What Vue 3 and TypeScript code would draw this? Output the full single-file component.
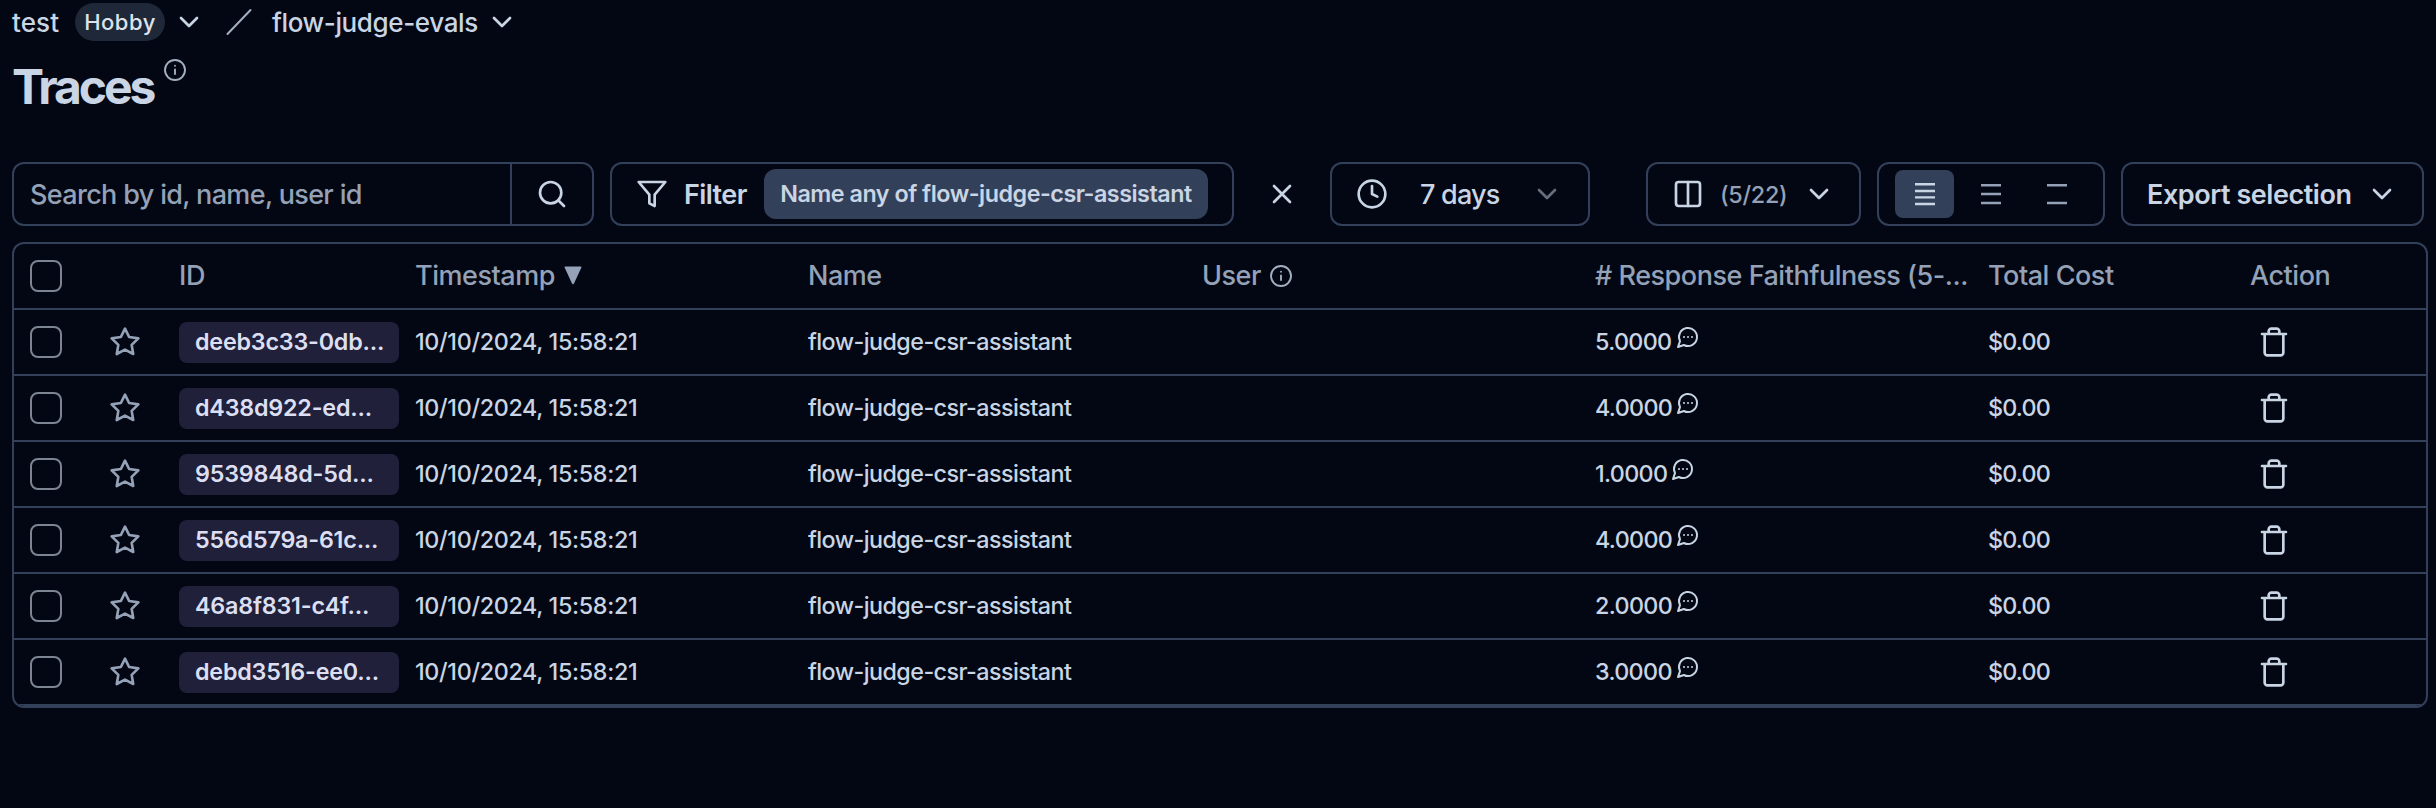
<script setup lang="ts">
interface Trace {
  id: string
  timestamp: string
  name: string
  score: string
  cost: string
}

const timestamp = '10/10/2024, 15:58:21'
const name = 'flow-judge-csr-assistant'

const traces: Trace[] = [
  { id: 'deeb3c33-0db...', timestamp, name, score: '5.0000', cost: '$0.00' },
  { id: 'd438d922-ed...', timestamp, name, score: '4.0000', cost: '$0.00' },
  { id: '9539848d-5d...', timestamp, name, score: '1.0000', cost: '$0.00' },
  { id: '556d579a-61c...', timestamp, name, score: '4.0000', cost: '$0.00' },
  { id: '46a8f831-c4f...', timestamp, name, score: '2.0000', cost: '$0.00' },
  { id: 'debd3516-ee0...', timestamp, name, score: '3.0000', cost: '$0.00' },
]
</script>

<template>
  <main class="page">
    <nav class="crumbs">
      <span class="crumb test">test</span>
      <span class="plan">Hobby</span>
      <svg class="icon org-chevron" viewBox="0 0 24 24"><path d="m6 9 6 6 6-6" /></svg>
      <svg class="slash" viewBox="0 0 26 28"><path d="M24.5 2 1.5 26" /></svg>
      <span class="crumb">flow-judge-evals</span>
      <svg class="icon project-chevron" viewBox="0 0 24 24"><path d="m6 9 6 6 6-6" /></svg>
    </nav>

    <header class="title">
      <h1>Traces</h1>
      <svg class="icon info" viewBox="0 0 24 24"><circle cx="12" cy="12" r="10" /><path d="M12 16v-4.5M12 7.7v.1" /></svg>
    </header>

    <section class="toolbar">
      <div class="box search">
        <span class="placeholder">Search by id, name, user id</span>
        <button class="search-btn">
          <svg class="icon" viewBox="0 0 24 24"><circle cx="11" cy="11" r="8" /><path d="m21 21-4.3-4.3" /></svg>
        </button>
      </div>

      <button class="box filter">
        <svg class="icon" viewBox="0 0 24 24"><path d="M22 3H2l8 9.46V19l4 2v-8.54L22 3z" /></svg>
        <span class="filter-label">Filter</span>
        <span class="badge">Name any of flow-judge-csr-assistant</span>
      </button>

      <button class="clear">
        <svg class="icon" viewBox="0 0 24 24"><path d="M18 6 6 18M6 6l12 12" /></svg>
      </button>

      <button class="box range">
        <svg class="icon" viewBox="0 0 24 24"><circle cx="12" cy="12" r="10" /><path d="M12 6v6l4 2" /></svg>
        <span class="range-label">7 days</span>
        <svg class="icon faded" viewBox="0 0 24 24"><path d="m6 9 6 6 6-6" /></svg>
      </button>

      <div class="right">
        <button class="box columns">
          <svg class="icon" viewBox="0 0 24 24"><rect x="3" y="3" width="18" height="18" rx="2" /><path d="M12 3v18" /></svg>
          <span class="count">(5/22)</span>
          <svg class="icon" viewBox="0 0 24 24"><path d="m6 9 6 6 6-6" /></svg>
        </button>

        <div class="box density">
          <button class="density-btn active">
            <svg viewBox="0 0 20 24"><path d="M0 2.3h20M0 9h20M0 15.4h20M0 22h20" /></svg>
          </button>
          <button class="density-btn">
            <svg viewBox="0 0 20 24"><path d="M0 3.3h20M0 12h20M0 21h20" /></svg>
          </button>
          <button class="density-btn">
            <svg viewBox="0 0 20 24"><path d="M0 3.3h20M0 21h20" /></svg>
          </button>
        </div>

        <button class="box export">
          <span class="export-label">Export selection</span>
          <svg class="icon" viewBox="0 0 24 24"><path d="m6 9 6 6 6-6" /></svg>
        </button>
      </div>
    </section>

    <section class="table">
      <div class="row head">
        <div><span class="check"></span></div>
        <div></div>
        <div class="text">ID</div>
        <div class="text">Timestamp <svg class="sort" viewBox="0 0 18 19"><path d="M1.2.5h15.6q1 0 .6 1L10 17.6q-1 1.6-2 0L.6 1.5q-.4-1 .6-1z" /></svg></div>
        <div class="text">Name</div>
        <div class="text">User <svg class="icon info" viewBox="0 0 24 24"><circle cx="12" cy="12" r="10" /><path d="M12 16v-4.5M12 7.7v.1" /></svg></div>
        <div class="text"># Response Faithfulness (5-...</div>
        <div class="text">Total Cost</div>
        <div class="text">Action</div>
      </div>
      <div v-for="trace in traces" :key="trace.id" class="row">
        <div><span class="check"></span></div>
        <div>
          <svg class="icon star" viewBox="0 0 24 24"><path d="m12 2 3.09 6.26L22 9.27l-5 4.87 1.18 6.88L12 17.77l-6.18 3.25L7 14.14 2 9.27l6.91-1.01L12 2z" /></svg>
        </div>
        <div><span class="id">{{ trace.id }}</span></div>
        <div class="text date">{{ trace.timestamp }}</div>
        <div class="text name">{{ trace.name }}</div>
        <div></div>
        <div class="text score">
          {{ trace.score }}
          <svg class="icon comment" viewBox="0 0 24 24"><path d="M7.9 20A9 9 0 1 0 4 16.1L2 22Z" /><path d="M8 12h.01M12 12h.01M16 12h.01" /></svg>
        </div>
        <div class="text cost">{{ trace.cost }}</div>
        <div class="action">
          <svg class="icon" viewBox="0 0 24 24"><path d="M3 6h18M19 6v14c0 1-1 2-2 2H7c-1 0-2-1-2-2V6M8 6V4c0-1 1-2 2-2h4c1 0 2 1 2 2v2" /></svg>
        </div>
      </div>
    </section>
  </main>
</template>

<style>
html,
body {
  background: #020713;
}
</style>

<style scoped>
.page {
  box-sizing: border-box;
  width: 2436px;
  height: 808px;
  padding: 2px 8px 0 12px;
  overflow: hidden;
  background: #020713;
  color: #c9d5e4;
  font-family: Inter, "Liberation Sans", sans-serif;
  font-size: 27px;
  font-weight: 450;
  white-space: nowrap;
}

button {
  margin: 0;
  padding: 0;
  border: 0;
  background: none;
  color: inherit;
  font: inherit;
}

.icon {
  display: block;
  flex: none;
  width: 32px;
  height: 32px;
  fill: none;
  stroke: currentColor;
  stroke-width: 2;
  stroke-linecap: round;
  stroke-linejoin: round;
}

.crumbs {
  display: flex;
  align-items: center;
  height: 40px;
}

.crumb {
  font-size: 26px;
  letter-spacing: -0.37px;
}

.test {
  width: 63px;
  letter-spacing: 0.1px;
}

.plan {
  width: 90px;
  height: 38px;
  border-radius: 19px;
  background: #1f2839;
  color: #dce3ec;
  font-size: 22px;
  line-height: 38px;
  letter-spacing: 0.5px;
  text-align: center;
}

.org-chevron {
  margin-left: 8px;
}

.slash {
  width: 26px;
  height: 28px;
  margin: 0 20px 0 21px;
  fill: none;
  stroke: #a3afc0;
  stroke-width: 2;
  stroke-linecap: round;
}

.project-chevron {
  margin-left: 8px;
}

.title {
  display: flex;
  height: 88px;
  align-items: center;
}

.title h1 {
  margin: 2px 0 0;
  font-size: 48px;
  font-weight: 750;
  line-height: 56px;
  letter-spacing: -3.1px;
}

.info {
  width: 24px;
  height: 24px;
  stroke-width: 1.9;
  color: #a3afc0;
}

.title .info {
  margin: -32px 0 0 10px;
}

.toolbar {
  display: flex;
  align-items: center;
  height: 64px;
  margin-top: 32px;
}

.box {
  box-sizing: border-box;
  display: flex;
  align-items: center;
  height: 64px;
  border: 2px solid #33405a;
  border-radius: 12px;
}

.search {
  width: 582px;
}

.placeholder {
  flex: 1;
  padding-left: 16px;
  color: #94a1b6;
  letter-spacing: -0.66px;
}

.search-btn {
  display: flex;
  align-items: center;
  justify-content: center;
  width: 82px;
  height: 60px;
  border-left: 2px solid #33405a;
}

.filter {
  width: 624px;
  margin-left: 16px;
  padding-left: 24px;
}

.filter-label {
  width: 78px;
  margin-left: 16px;
  font-weight: 560;
  letter-spacing: -0.6px;
  text-align: left;
}

.badge {
  width: 444px;
  height: 50px;
  margin-left: 2px;
  border-radius: 12px;
  background: #33405a;
  font-size: 23.3px;
  font-weight: 560;
  line-height: 50px;
  letter-spacing: -0.48px;
  text-align: center;
}

.clear {
  display: flex;
  align-items: center;
  justify-content: center;
  width: 96px;
  height: 64px;
}

.range {
  width: 260px;
  padding-left: 24px;
}

.range-label {
  width: 111px;
  margin-left: 32px;
  font-weight: 540;
  letter-spacing: -0.8px;
  text-align: left;
}

.faded {
  opacity: 0.5;
}

.right {
  display: flex;
  gap: 16px;
  margin-left: auto;
  padding-right: 4px;
}

.columns {
  width: 215px;
  padding-left: 24px;
}

.count {
  width: 83px;
  margin-left: 16px;
  color: #94a1b6;
  font-size: 23.3px;
  font-weight: 500;
  letter-spacing: -0.25px;
  text-align: left;
}

.density {
  gap: 8px;
  width: 228px;
  padding-left: 16px;
}

.density-btn {
  display: flex;
  align-items: center;
  justify-content: center;
  width: 58px;
  height: 48px;
  border-radius: 8px;
  color: #94a1b6;
}

.density-btn svg {
  width: 20px;
  height: 24px;
  fill: none;
  stroke: currentColor;
  stroke-width: 2.4;
}

.density-btn.active {
  width: 59px;
  background: #33405a;
  color: #c9d5e4;
}

.export {
  width: 303px;
  padding-left: 24px;
}

.export-label {
  width: 219px;
  font-weight: 560;
  letter-spacing: -0.45px;
  text-align: left;
}

.table {
  box-sizing: border-box;
  width: 2416px;
  height: 466px;
  margin-top: 16px;
  border: 2px solid #33405a;
  border-radius: 12px;
  overflow: hidden;
}

.row {
  box-sizing: border-box;
  display: grid;
  grid-template-columns: 79px 70px 236px 393px 394px 393px 393px 262px 1fr;
  align-items: center;
  height: 66px;
  padding-left: 16px;
  border-bottom: 2px solid #33405a;
  font-size: 23.3px;
}

.row > div {
  display: flex;
  align-items: center;
}

.row > .text {
  padding-bottom: 1px;
}

.head {
  color: #94a1b6;
  font-size: 27px;
  font-weight: 540;
  letter-spacing: -0.47px;
}

.check {
  box-sizing: border-box;
  width: 32px;
  height: 32px;
  border: 2px solid #7d8592;
  border-radius: 8px;
}

.sort {
  width: 18px;
  height: 19px;
  margin-left: 9px;
  fill: currentColor;
}

.head .info {
  margin-left: 8px;
}

.star {
  color: #94a1b6;
}

.id {
  box-sizing: border-box;
  width: 220px;
  height: 41px;
  padding-left: 16px;
  border-radius: 8px;
  background: #20203a;
  color: #dcdff2;
  font-weight: 640;
  line-height: 40px;
  letter-spacing: -0.2px;
}

.date {
  letter-spacing: -0.33px;
}

.name {
  letter-spacing: -0.55px;
}

.score {
  letter-spacing: -0.65px;
}

.comment {
  width: 24px;
  height: 24px;
  margin: -9px 0 0 4px;
}

.cost {
  letter-spacing: -0.8px;
}

.action {
  padding-left: 8px;
}
</style>
